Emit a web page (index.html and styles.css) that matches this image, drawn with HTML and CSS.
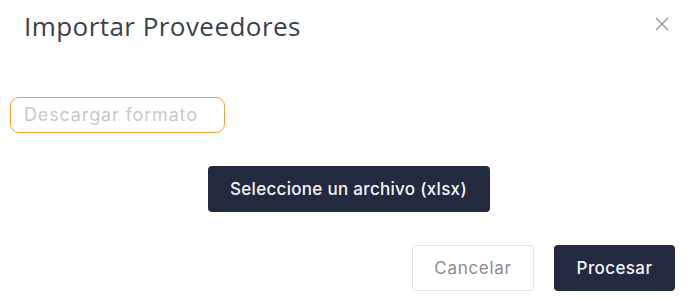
FILE: index.html
```html
<!DOCTYPE html>
<html lang="es">
<head>
	<meta charset="UTF-8">
	<title>Importar Proveedores</title>
	<link rel="stylesheet" href="styles.css">
</head>
<body>
	<div class="modal">
		<div class="modal-head">
			<h2 class="modal-title">Importar Proveedores</h2>
			<span class="modal-close">
				<svg width="14" height="14" viewBox="0 0 14 14"><path d="M1 1L13 13M13 1L1 13" stroke="#9a9ba3" stroke-width="1.5" fill="none"/></svg>
			</span>
		</div>
		<div class="modal-body">
			<div class="field">Descargar formato</div>
			<div class="upload">
				<span class="btn btn-dark btn-upload">Seleccione un archivo (xlsx)</span>
			</div>
		</div>
		<div class="modal-foot">
			<span class="btn btn-light btn-cancel">Cancelar</span>
			<span class="btn btn-dark btn-process">Procesar</span>
		</div>
	</div>
</body>
</html>
```

FILE: styles.css
```css
* {
	margin: 0;
	padding: 0;
	box-sizing: border-box;
}
html,body {
	height: 100%;
}
body {
	background: #fff;
	font-family: Inter, "DejaVu Sans", sans-serif;
}
.modal {
	width: 700px;
	height: 300px;
}
.modal-head {
	display: flex;
	justify-content: space-between;
	align-items: flex-start;
	height: 64px;
	padding: 8px 31px 0 24px;
}
.modal-title {
	color: #3b3f49;
	font-family: "Open Sans", sans-serif;
	font-size: 26px;
	font-weight: 400;
	line-height: 36px;
	letter-spacing: 0.45px;
}
.modal-close {
	display: block;
	margin-top: 9px;
}
.modal-close svg {
	display: block;
}
.modal-body {
	padding: 33px 0 0 10px;
}
.field {
	width: 215px;
	height: 36px;
	padding-left: 13px;
	border: 1.5px solid #f0a33a;
	border-radius: 9px;
	color: #c8c9cc;
	font-size: 18px;
	line-height: 33px;
	letter-spacing: 0.85px;
}
.upload {
	display: flex;
	justify-content: center;
	padding: 33px 0 0 0;
	margin-left: -10px;
}
.btn {
	display: inline-flex;
	align-items: center;
	justify-content: center;
	height: 46px;
	border-radius: 4px;
	font-size: 17px;
	font-weight: 500;
	letter-spacing: 0.3px;
}
.btn-dark {
	background: #232a40;
	color: #f4f5f8;
}
.btn-upload {
	width: 282px;
	margin-left: -3px;
}
.btn-light {
	border: 1px solid #e3e4e6;
	background: #fff;
	color: #8a8b90;
	font-weight: 400;
}
.modal-foot {
	display: flex;
	justify-content: flex-end;
	gap: 20px;
	padding: 33px 25px 0 0;
}
.btn-cancel {
	width: 122px;
	letter-spacing: 0.7px;
}
.btn-process {
	width: 121px;
	letter-spacing: 0.4px;
}
```
